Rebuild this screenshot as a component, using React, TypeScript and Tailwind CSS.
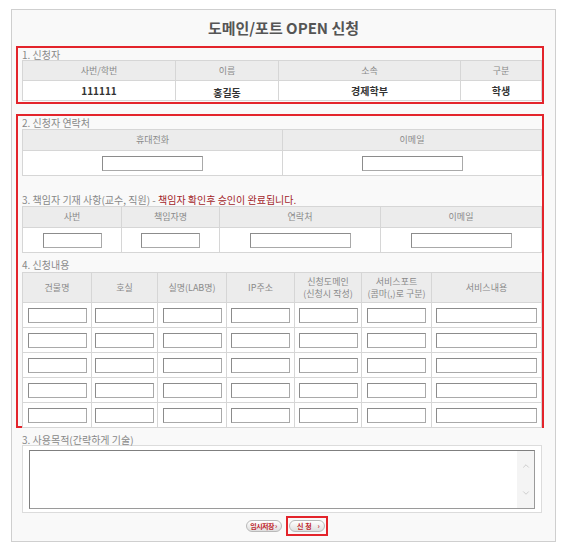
import { ChevronDown, ChevronUp } from "lucide-react";

const font = { fontFamily: '"Noto Sans CJK KR", "Noto Sans", sans-serif' };

const th = "border border-[#d6d6d6] bg-[#ececec] text-center align-middle text-[9px] font-normal leading-[12px] text-[#8a8a8a]";
const td = "border border-[#d6d6d6] bg-white text-center align-middle";

function Box({ w, h = "h-[15px]" }: { w: string; h?: string }) {
  return (
    <input
      type="text"
      className={`${w} ${h} border border-[#a9a9a9] border-t-[#8c8c8c] border-l-[#8c8c8c] bg-white outline-none`}
    />
  );
}

function Label({ children, className = "" }: { children: React.ReactNode; className?: string }) {
  return <div className={`text-[10px] leading-[11px] text-[#888] ${className}`}>{children}</div>;
}

const requestCols = [
  { w: "w-[69px]", label: ["건물명"] },
  { w: "w-[66px]", label: ["호실"] },
  { w: "w-[69px]", label: ["실명(LAB명)"] },
  { w: "w-[68px]", label: ["IP주소"] },
  { w: "w-[67px]", label: ["신청도메인", "(신청시 작성)"] },
  { w: "w-[70px]", label: ["서비스포트", "(콤마(,)로 구분)"] },
  { w: "w-[110px]", label: ["서비스내용"] },
];

export default function App() {
  return (
    <div className="h-[550px] w-[565px] bg-white pl-[11px] pt-[9px]" style={font}>
      <div className="flex h-[533px] w-[545px] flex-col border border-[#cfcfcf] bg-[#f9f9f9]">
        <h1 className="flex h-[36px] items-center justify-center pt-[1px] text-[15px] font-bold text-[#555]">
          도메인/포트 OPEN 신청
        </h1>

        {/* 1. applicant */}
        <section className="ml-[4px] h-[58px] w-[528px] border-2 border-[#e3242b] pl-[4px]">
          <Label className="pt-[1px]">1. 신청자</Label>
          <table className="w-[519px] table-fixed border-collapse">
            <colgroup>
              <col className="w-[153px]" />
              <col className="w-[103px]" />
              <col className="w-[182px]" />
              <col className="w-[81px]" />
            </colgroup>
            <thead>
              <tr className="h-[20px]">
                <th className={th}>사번/학번</th>
                <th className={th}>이름</th>
                <th className={th}>소속</th>
                <th className={th}>구분</th>
              </tr>
            </thead>
            <tbody>
              <tr className="h-[20px] text-[10px] font-bold text-[#333]">
                <td className={td}>111111</td>
                <td className={`${td} pt-[3px]`}>홍길동</td>
                <td className={td}>경제학부</td>
                <td className={td}>학생</td>
              </tr>
            </tbody>
          </table>
        </section>

        {/* 2 - 4 */}
        <section className="ml-[4px] mt-[10px] h-[314px] w-[528px] border-2 border-[#e3242b] pl-[4px]">
          <Label className="h-[13px] pt-[1px]">2. 신청자 연락처</Label>
          <table className="w-[519px] table-fixed border-collapse">
            <colgroup>
              <col className="w-[260px]" />
              <col className="w-[259px]" />
            </colgroup>
            <thead>
              <tr className="h-[21px]">
                <th className={th}>휴대전화</th>
                <th className={th}>이메일</th>
              </tr>
            </thead>
            <tbody>
              <tr className="h-[25px]">
                <td className={td}>
                  <Box w="w-[101px]" />
                </td>
                <td className={td}>
                  <Box w="w-[101px]" />
                </td>
              </tr>
            </tbody>
          </table>

          <div className="flex h-[30px] items-end pb-[1px] text-[10px] leading-[11px] text-[#888]">
            3. 책임자 기재 사항(교수, 직원) -&nbsp;
            <span className="text-[#a3262a]">책임자 확인후 승인이 완료됩니다.</span>
          </div>
          <table className="w-[519px] table-fixed border-collapse">
            <colgroup>
              <col className="w-[99px]" />
              <col className="w-[98px]" />
              <col className="w-[161px]" />
              <col className="w-[161px]" />
            </colgroup>
            <thead>
              <tr className="h-[21px]">
                <th className={th}>사번</th>
                <th className={th}>책임자명</th>
                <th className={th}>연락처</th>
                <th className={th}>이메일</th>
              </tr>
            </thead>
            <tbody>
              <tr className="h-[24px]">
                <td className={td}>
                  <Box w="w-[59px]" />
                </td>
                <td className={td}>
                  <Box w="w-[59px]" />
                </td>
                <td className={td}>
                  <Box w="w-[101px]" />
                </td>
                <td className={td}>
                  <Box w="w-[101px]" />
                </td>
              </tr>
            </tbody>
          </table>

          <Label className="flex h-[19px] items-end pb-[2px]">4. 신청내용</Label>
          <table className="w-[519px] table-fixed border-collapse">
            <colgroup>
              {requestCols.map((c, i) => (
                <col key={i} className={c.w} />
              ))}
            </colgroup>
            <thead>
              <tr className="h-[30px]">
                {requestCols.map((c, i) => (
                  <th key={i} className={th}>
                    {c.label.map((l, j) => (
                      <div key={j}>{l}</div>
                    ))}
                  </th>
                ))}
              </tr>
            </thead>
            <tbody>
              {[0, 1, 2, 3, 4].map((r) => (
                <tr key={r} className="h-[25px]">
                  {requestCols.map((c, i) => (
                    <td key={i} className={td}>
                      <Box w={i === 6 ? "w-[101px]" : "w-[59px]"} />
                    </td>
                  ))}
                </tr>
              ))}
            </tbody>
          </table>
        </section>

        {/* purpose */}
        <div className="ml-[10px] mt-[3px] w-[520px]">
          <Label className="h-[14px] pt-[3px]">3. 사용목적(간략하게 기술)</Label>
          <div className="h-[68px] border border-[#dcdcdc] bg-white px-[6px] pt-[4px]">
            <div className="flex h-[59px] border border-[#9a9a9a] border-t-[#7f7f7f] border-l-[#7f7f7f] bg-white">
              <textarea className="h-full flex-1 resize-none bg-white outline-none" />
              <div className="flex w-[17px] flex-col items-center justify-between bg-[#f4f4f4] py-[10px] text-[#b5b5b5]">
                <ChevronUp size={10} strokeWidth={1.5} />
                <ChevronDown size={10} strokeWidth={1.5} />
              </div>
            </div>
          </div>
        </div>

        {/* buttons */}
        <div className="mt-[4px] flex h-[18px] items-center justify-center gap-[4px] pl-[6px]">
          <button
            type="button"
            className="flex h-[12px] w-[36px] items-center justify-center rounded-full border border-[#b9b9b9] bg-gradient-to-b from-white to-[#dedede] text-[7px] font-bold leading-none tracking-[-0.5px] text-[#c0282e]"
          >
            임시저장 ›
          </button>
          <div className="border-2 border-[#e3242b] px-[1px] py-[2px]">
            <button
              type="button"
              className="flex h-[12px] w-[36px] items-center justify-center gap-[6px] rounded-full border border-[#b9b9b9] bg-gradient-to-b from-white to-[#dedede] pl-[4px] text-[7px] font-bold leading-none text-[#c0282e]"
            >
              <span>신 청</span>
              <span>›</span>
            </button>
          </div>
        </div>
      </div>
    </div>
  );
}
